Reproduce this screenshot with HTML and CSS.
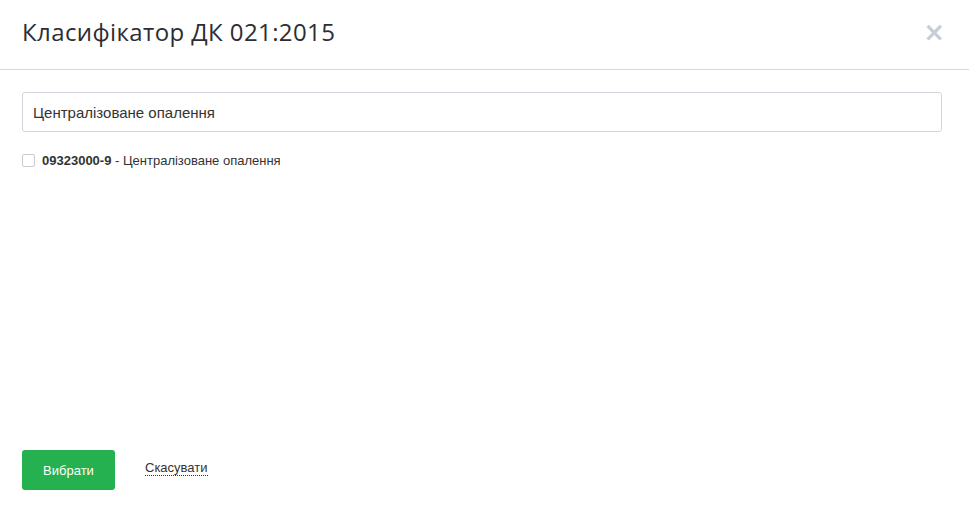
FILE: index.html
```html
<!DOCTYPE html>
<html lang="uk">
<head>
    <meta charset="UTF-8">
    <meta name="viewport" content="width=device-width, initial-scale=1.0">
    <title>Класифікатор ДК 021:2015</title>
    <link rel="stylesheet" href="styles.css">
</head>
<body>
    <div class="modal">
        <div class="modal-header">
            <h2 class="modal-title">Класифікатор ДК 021:2015</h2>
            <span class="close">&times;</span>
        </div>
        <div class="modal-body">
            <input class="search" type="text" value="Централізоване опалення">
            <ul class="list">
                <li>
                    <label class="item">
                        <input type="checkbox">
                        <span><b>09323000-9</b> - Централізоване опалення</span>
                    </label>
                </li>
            </ul>
        </div>
        <div class="modal-footer">
            <button class="btn">Вибрати</button>
            <a class="cancel" href="#">Скасувати</a>
        </div>
    </div>
</body>
</html>
```

FILE: styles.css
```css
* {
    margin: 0;
    padding: 0;
    box-sizing: border-box;
}

body {
    font-family: "Liberation Sans", Arial, sans-serif;
    color: #333;
    background: #fff;
}

ul {
    list-style: none;
}

.modal {
    width: 969px;
    height: 511px;
    display: flex;
    flex-direction: column;
}

.modal-header {
    height: 70px;
    display: flex;
    align-items: center;
    justify-content: space-between;
    padding: 0 24px 0 22px;
    border-bottom: 1px solid #d8d8de;
}

.modal-title {
    font-family: "Open Sans", sans-serif;
    font-weight: 400;
    font-size: 24px;
    letter-spacing: 0.4px;
    color: #2d2d33;
    margin-top: -6px;
}

.close {
    font-family: "DejaVu Sans", sans-serif;
    font-size: 26px;
    font-weight: bold;
    color: #c8ccd6;
    line-height: 1;
    margin-top: -6px;
}

.modal-body {
    flex: 1;
    padding: 22px 27px 0 22px;
}

.search {
    width: 100%;
    height: 40px;
    border: 1px solid #d3d5dc;
    border-radius: 3px;
    padding: 0 10px;
    font-family: "Liberation Sans", Arial, sans-serif;
    font-size: 15px;
    color: #333;
    outline: none;
}

.list {
    margin-top: 21px;
}

.item {
    display: flex;
    align-items: center;
    font-size: 13px;
    color: #333;
}

.item input {
    appearance: none;
    width: 13px;
    height: 13px;
    border: 1px solid #ccc;
    border-radius: 2px;
    margin-right: 7px;
}

.modal-footer {
    display: flex;
    align-items: center;
    padding: 0 22px 21px;
}

.btn {
    width: 93px;
    height: 40px;
    border: none;
    border-radius: 3px;
    background: #25b14f;
    color: #fff;
    font-family: "Liberation Sans", Arial, sans-serif;
    font-size: 13px;
    margin-right: 30px;
}

.cancel {
    font-size: 13px;
    color: #333;
    text-decoration: none;
    border-bottom: 1px dotted #333;
    margin-top: -4px;
}
```
